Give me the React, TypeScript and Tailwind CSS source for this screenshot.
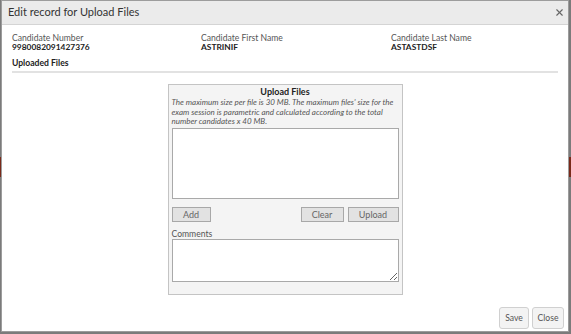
import { X } from 'lucide-react';

const FONT = "font-['Lato','Noto_Sans',sans-serif]";

function Field({ label, value }: { label: string; value: string }) {
  return (
    <div className="flex flex-col leading-[9px]">
      <span className="text-[8.6px] text-[#555]">{label}</span>
      <span className="text-[8.4px] font-bold text-[#222]">{value}</span>
    </div>
  );
}

function GrayButton({ children, className = '' }: { children: string; className?: string }) {
  return (
    <button
      className={`h-[15px] border border-[#a8a8a8] bg-[#e2e2e2] text-[9px] leading-none text-[#666] ${className}`}
    >
      {children}
    </button>
  );
}

export default function App() {
  return (
    <div className={`relative h-[334px] w-[571px] overflow-hidden bg-[#7b7b7b] ${FONT}`}>
      {/* page behind the overlay */}
      <div className="absolute left-0 top-[157px] h-[20px] w-full bg-[#7a2a1a]" />

      <div className="absolute left-[1px] top-0 flex h-[332px] w-[568px] flex-col border border-[#9c9c9c] bg-white">
        <div className="flex h-[24px] items-center justify-between border-b border-[#d4d4d4] bg-[#ebebeb] pl-[6px] pr-[3px]">
          <span className="text-[11px] text-[#333]">Edit record for Upload Files</span>
          <X size={11} strokeWidth={2.5} className="text-[#666]" />
        </div>

        <div className="flex flex-1 flex-col px-[10px] pt-[9px]">
          <div className="grid grid-cols-[189px_190px_1fr]">
            <Field label="Candidate Number" value="9980082091427376" />
            <Field label="Candidate First Name" value="ASTRINIF" />
            <Field label="Candidate Last Name" value="ASTASTDSF" />
          </div>
          <div className="mt-[6px] border-b-2 border-[#e2e2e2] pb-[3px] text-[8.6px] font-bold leading-[10px] text-[#222]">
            Uploaded Files
          </div>

          <div className="mt-[11px] flex w-[235px] flex-col self-center border border-[#c4c4c4] bg-[#f4f4f4] px-[3px] pb-[12px] pt-[1px]">
            <div className="text-center text-[9px] font-bold leading-[12px] text-[#222]">Upload Files</div>
            <p className="text-[8px] italic leading-[9.5px] text-[#555]">
              The maximum size per file is 30 MB. The maximum files' size for the exam session is parametric and
              calculated according to the total number candidates x 40 MB.
            </p>
            <div className="mt-[1.5px] h-[71px] border border-[#a9a9a9] bg-white" />
            <div className="mt-[8px] flex items-center">
              <GrayButton className="w-[39px]">Add</GrayButton>
              <GrayButton className="ml-auto w-[43px]">Clear</GrayButton>
              <GrayButton className="ml-[4px] w-[51px]">Upload</GrayButton>
            </div>
            <div className="mt-[7px] text-[8.6px] leading-[10px] text-[#555]">Comments</div>
            <textarea className="h-[43px] resize-y border border-[#a9a9a9] bg-white outline-none" />
          </div>
        </div>

        <div className="flex justify-end gap-[3px] pb-[2px] pr-[4px]">
          <button className="h-[22px] w-[30px] rounded-[3px] border border-[#d0d0d0] bg-[#f3f3f3] text-[8.6px] text-[#555]">
            Save
          </button>
          <button className="h-[22px] w-[32px] rounded-[3px] border border-[#d0d0d0] bg-[#f3f3f3] text-[8.6px] text-[#555]">
            Close
          </button>
        </div>
      </div>
    </div>
  );
}
